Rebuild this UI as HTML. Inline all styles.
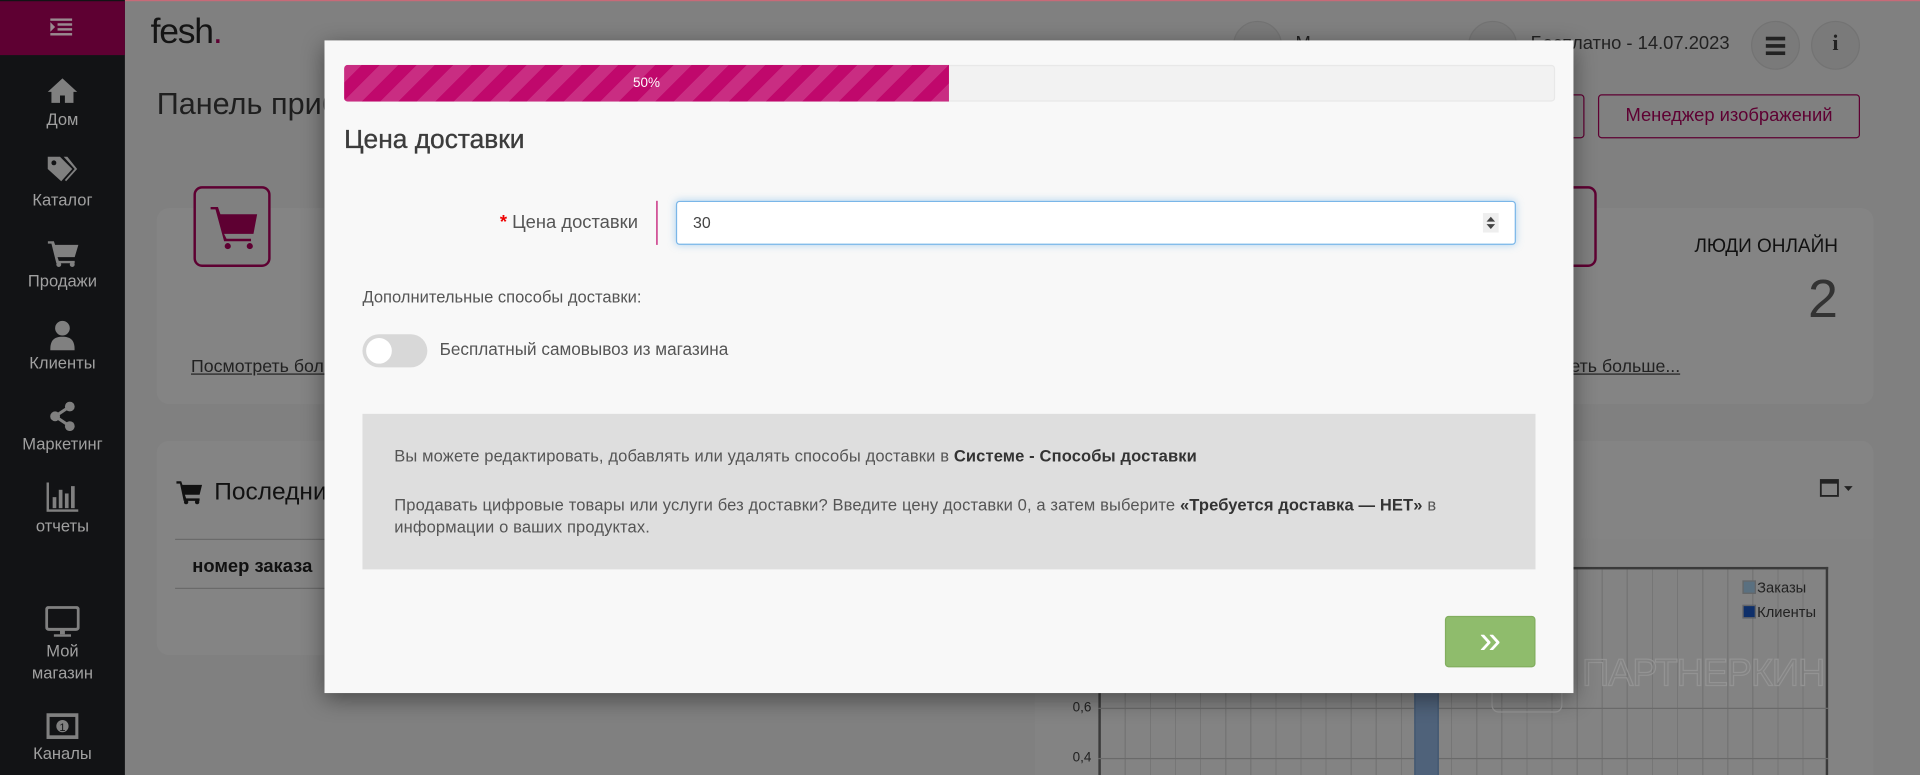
<!DOCTYPE html>
<html><head><meta charset="utf-8"><style>
*{box-sizing:border-box;margin:0;padding:0}
html,body{width:1920px;height:775px;overflow:hidden;background:#808080}
#w{position:absolute;left:0;top:0;width:1568px;height:633px;transform:scale(1.22449);transform-origin:0 0;font-family:"Liberation Sans","DejaVu Sans",sans-serif;color:#1a1a1a;background:#808080;overflow:hidden}
.a{position:absolute}
.sb{left:0;top:0;width:102px;height:633px;background:#121315}
.si{position:absolute;left:0;width:102px;text-align:center;color:#a0a0a0;font-size:13.5px;line-height:18px}
.card{background:#848484;border-radius:10px}
.circ{width:40px;height:40px;border-radius:50%;background:#7a7a7a;border:1px solid #737373}
.modal{left:265px;top:33px;width:1020px;height:533px;background:#f8f8f8;box-shadow:0 5px 18px rgba(0,0,0,.45)}
</style></head><body><div id="w">
<div class="a" style="left:0;top:0;width:1568px;height:1px;background:#c86a78"></div>
<div class="a sb"></div>
<div class="a" style="left:0;top:1px;width:102px;height:44px;background:#5e0032"></div>
<svg class="a" style="left:41px;top:15px" width="18" height="14"><g fill="#9a8a90"><rect x="0" y="0" width="18" height="2"/><rect x="6" y="4" width="12" height="2"/><rect x="6" y="8" width="12" height="2"/><rect x="0" y="12" width="18" height="2"/><path d="M0 3l4 4-4 4z"/></g></svg>
<svg class="a" style="left:38px;top:63px" width="26" height="22"><path d="M13 1L1 12h3v9h7v-6h4v6h7v-9h3z" fill="#808080"/></svg>
<div class="si" style="top:89px">Дом</div>
<svg class="a" style="left:38px;top:127px" width="26" height="24"><path d="M1 1h10l10 10-9 10L1 11z M14 1h3l8 10-9 10-1-1 8-9z" fill="#808080"/><circle cx="6" cy="6" r="2" fill="#121315"/></svg>
<div class="si" style="top:155px">Каталог</div>
<svg class="a" style="left:39px;top:196px" width="26" height="22"><path d="M0 1h5l1 3h19l-3 10H8l1 3h13v2H7L3 3H0z" fill="#808080"/><circle cx="9" cy="20" r="2" fill="#808080"/><circle cx="20" cy="20" r="2" fill="#808080"/></svg>
<div class="si" style="top:221px">Продажи</div>
<svg class="a" style="left:41px;top:261px" width="20" height="26"><circle cx="10" cy="7" r="6" fill="#808080"/><path d="M0 25c0-8 3-11 10-11s10 3 10 11z" fill="#808080"/></svg>
<div class="si" style="top:288px">Клиенты</div>
<svg class="a" style="left:40px;top:328px" width="22" height="24"><circle cx="17" cy="4" r="4" fill="#808080"/><circle cx="5" cy="12" r="4" fill="#808080"/><circle cx="17" cy="20" r="4" fill="#808080"/><path d="M5 12L17 4M5 12l12 8" stroke="#808080" stroke-width="2.5"/></svg>
<div class="si" style="top:354px">Маркетинг</div>
<svg class="a" style="left:38px;top:394px" width="26" height="24"><path d="M1 0v23h25" stroke="#808080" stroke-width="2" fill="none"/><rect x="5" y="12" width="3" height="9" fill="#808080"/><rect x="10" y="6" width="3" height="15" fill="#808080"/><rect x="15" y="9" width="3" height="12" fill="#808080"/><rect x="20" y="3" width="3" height="18" fill="#808080"/></svg>
<div class="si" style="top:421px">отчеты</div>
<svg class="a" style="left:37px;top:495px" width="28" height="26"><rect x="1" y="1" width="26" height="18" rx="2" stroke="#808080" stroke-width="2.5" fill="none"/><rect x="12" y="19" width="4" height="4" fill="#808080"/><rect x="7" y="23" width="14" height="2" fill="#808080"/></svg>
<div class="si" style="top:523px">Мой<br>магазин</div>
<svg class="a" style="left:38px;top:582px" width="26" height="22"><rect x="1" y="2" width="24" height="18" stroke="#808080" stroke-width="3" fill="none"/><circle cx="13" cy="11" r="5" fill="#808080"/><text x="13" y="15" font-size="9" text-anchor="middle" fill="#121315" font-family="Liberation Sans">1</text></svg>
<div class="si" style="top:607px">Каналы</div>

<div class="a" style="left:123px;top:10px;font-size:29px;letter-spacing:-1px;color:#141414">fesh<span style="color:#5e0032">.</span></div>
<div class="a" style="left:128px;top:71px;font-size:25px;color:#1f1f1f">Панель приборов</div>
<div class="a circ" style="left:1007px;top:17px"></div>
<div class="a" style="left:1058px;top:27px;font-size:15px;color:#222">М</div>
<div class="a circ" style="left:1199px;top:17px"></div>
<div class="a" style="left:1250px;top:27px;font-size:15px;color:#222">Бесплатно - 14.07.2023</div>
<div class="a circ" style="left:1430px;top:17px"></div>
<svg class="a" style="left:1442px;top:29px" width="16" height="16"><rect y="1" width="16" height="3" fill="#222"/><rect y="7" width="16" height="3" fill="#222"/><rect y="13" width="16" height="3" fill="#222"/></svg>
<div class="a circ" style="left:1479px;top:17px"></div>
<div class="a" style="left:1479px;top:25px;width:40px;text-align:center;font:bold 18px 'Liberation Serif',serif;color:#222">i</div>
<div class="a" style="left:1200px;top:77px;width:94px;height:36px;border:1px solid #5e0032;border-radius:3px"></div>
<div class="a" style="left:1305px;top:77px;width:214px;height:36px;border:1px solid #5e0032;border-radius:3px;color:#5e0032;font-size:15px;text-align:center;line-height:34px">Менеджер изображений</div>

<div class="a card" style="left:128px;top:170px;width:1402px;height:160px"></div>
<div class="a" style="left:158px;top:152px;width:63px;height:66px;border:2px solid #5e0032;border-radius:7px;background:#808080"></div>
<svg class="a" style="left:171px;top:167px" width="40" height="38"><path d="M1 2h6l2 6h30l-3 16H12l2 4h20v2H12L5 4H1z" fill="#5e0032"/><circle cx="15" cy="34" r="2.5" fill="#5e0032"/><circle cx="33" cy="34" r="2.5" fill="#5e0032"/></svg>
<div class="a" style="left:1240px;top:152px;width:64px;height:66px;border:2px solid #5e0032;border-radius:7px;background:#808080"></div>
<div class="a" style="left:1300px;top:193px;width:201px;text-align:right;font-size:15.5px;color:#111">ЛЮДИ ОНЛАЙН</div>
<div class="a" style="left:1400px;top:220px;width:101px;text-align:right;font-size:44px;color:#333">2</div>
<div class="a" style="left:156px;top:292px;font-size:14.5px;color:#222;text-decoration:underline">Посмотреть больше...</div>
<div class="a" style="left:1260px;top:292px;font-size:14.5px;color:#222;text-decoration:underline">отреть больше...</div>

<div class="a card" style="left:128px;top:360px;width:1402px;height:175px"></div>
<svg class="a" style="left:144px;top:392px" width="22" height="20"><path d="M0 1h4l1 3h16l-2 8H7l1 3h11v2H6L3 3H0z" fill="#111"/><circle cx="8" cy="18" r="1.8" fill="#111"/><circle cx="17" cy="18" r="1.8" fill="#111"/></svg>
<div class="a" style="left:175px;top:391px;font-size:20px;color:#111">Последние заказы</div>
<div class="a" style="left:143px;top:440px;width:300px;height:1px;background:#6a6a6a"></div>
<div class="a" style="left:157px;top:454px;font-size:15px;font-weight:bold;color:#111">номер заказа</div>
<div class="a" style="left:143px;top:480px;width:300px;height:1px;background:#6a6a6a"></div>
<svg class="a" style="left:1486px;top:390px" width="30" height="16"><rect x="1" y="2" width="14" height="13" fill="none" stroke="#222" stroke-width="1.5"/><rect x="1" y="2" width="14" height="3" fill="#222"/><path d="M20 7h7l-3.5 4z" fill="#222"/></svg>
<div class="a" style="left:845px;top:440px;width:685px;height:193px;background:#838383"></div>
<div class="a" style="left:897px;top:463px;width:596px;height:175px;border:2px solid #3a3a3a;border-bottom:none;background:repeating-linear-gradient(90deg,transparent 0,transparent 19.5px,#767676 19.5px,#767676 20.5px)"></div>
<div class="a" style="left:897px;top:578px;width:596px;height:1px;background:#6a6a6a"></div>
<div class="a" style="left:897px;top:619px;width:596px;height:1px;background:#6a6a6a"></div>
<div class="a" style="left:1155px;top:560px;width:20px;height:80px;background:#4f627a;border:1px solid #3f5570"></div>
<div class="a" style="left:876px;top:572px;font-size:11px;color:#222">0,6</div>
<div class="a" style="left:876px;top:613px;font-size:11px;color:#222">0,4</div>
<div class="a" style="left:1423px;top:474px;width:11px;height:11px;background:#5a7080;border:1px solid #666"></div>
<div class="a" style="left:1435px;top:473px;font-size:12px;color:#222">Заказы</div>
<div class="a" style="left:1423px;top:494px;width:11px;height:11px;background:#0e2f6a;border:1px solid #666"></div>
<div class="a" style="left:1435px;top:493px;font-size:12px;color:#222">Клиенты</div>
<div class="a" style="left:1292px;top:532px;font-size:31px;color:transparent;-webkit-text-stroke:1px #939393;letter-spacing:-1px">ПАРТНЕРКИН</div>
<div class="a" style="left:1218px;top:522px;width:58px;height:60px;border:1.5px solid #959595;border-radius:6px"></div>

<div class="a modal"></div>
<div class="a" style="left:281px;top:53px;width:989px;height:30px;background:#f2f2f2;border:1px solid #e8e8e8;border-radius:3px"></div>
<div class="a" style="left:281px;top:53px;width:494px;height:30px;border-radius:3px 0 0 3px;background:#c0086c repeating-linear-gradient(-45deg,rgba(255,255,255,.15) 0,rgba(255,255,255,.15) 10.6px,transparent 10.6px,transparent 21.2px);color:#fff;font-size:11px;text-align:center;line-height:30px">50%</div>
<div class="a" style="left:281px;top:102px;font-size:21.5px;color:#3c3c3c;-webkit-text-stroke:0.3px #3c3c3c">Цена доставки</div>
<div class="a" style="left:300px;top:173px;width:221px;text-align:right;font-size:15px;color:#555"><span style="color:#e00;font-weight:bold">*</span> Цена доставки</div>
<div class="a" style="left:536px;top:164px;width:1px;height:36px;background:#c0086c"></div>
<div class="a" style="left:552px;top:164px;width:686px;height:36px;background:#fff;border:1px solid #7ab6e8;border-radius:3px;box-shadow:0 0 6px rgba(102,175,233,.5);font-size:13px;color:#444;padding-left:13px;line-height:34px">30</div>
<svg class="a" style="left:1211px;top:174px" width="13" height="16"><rect width="13" height="16" fill="#eee"/><path d="M6.5 3l3.5 4H3z M6.5 13l3.5-4H3z" fill="#444"/></svg>
<div class="a" style="left:296px;top:235px;font-size:13.5px;color:#555">Дополнительные способы доставки:</div>
<div class="a" style="left:296px;top:273px;width:53px;height:27px;border-radius:14px;background:#d8d8d8"></div>
<div class="a" style="left:299px;top:276px;width:21px;height:21px;border-radius:50%;background:#fff"></div>
<div class="a" style="left:359px;top:277px;font-size:14px;color:#555">Бесплатный самовывоз из магазина</div>
<div class="a" style="left:296px;top:338px;width:958px;height:127px;background:#dedede"></div>
<div class="a" style="left:322px;top:364px;font-size:13.5px;color:#555;line-height:18px;width:900px;letter-spacing:0.1px">Вы можете редактировать, добавлять или удалять способы доставки в <b style="color:#333">Системе - Способы доставки</b><br><div style="height:22px"></div>Продавать цифровые товары или услуги без доставки? Введите цену доставки 0, а затем выберите <b style="color:#333">«Требуется доставка — НЕТ»</b> в информации о ваших продуктах.</div>
<div class="a" style="left:1180px;top:503px;width:74px;height:42px;background:#8fbc6c;border:1px solid #82ae5f;border-radius:3px;color:#fff;font-size:32px;text-align:center;line-height:36px">»</div>
</div></body></html>
